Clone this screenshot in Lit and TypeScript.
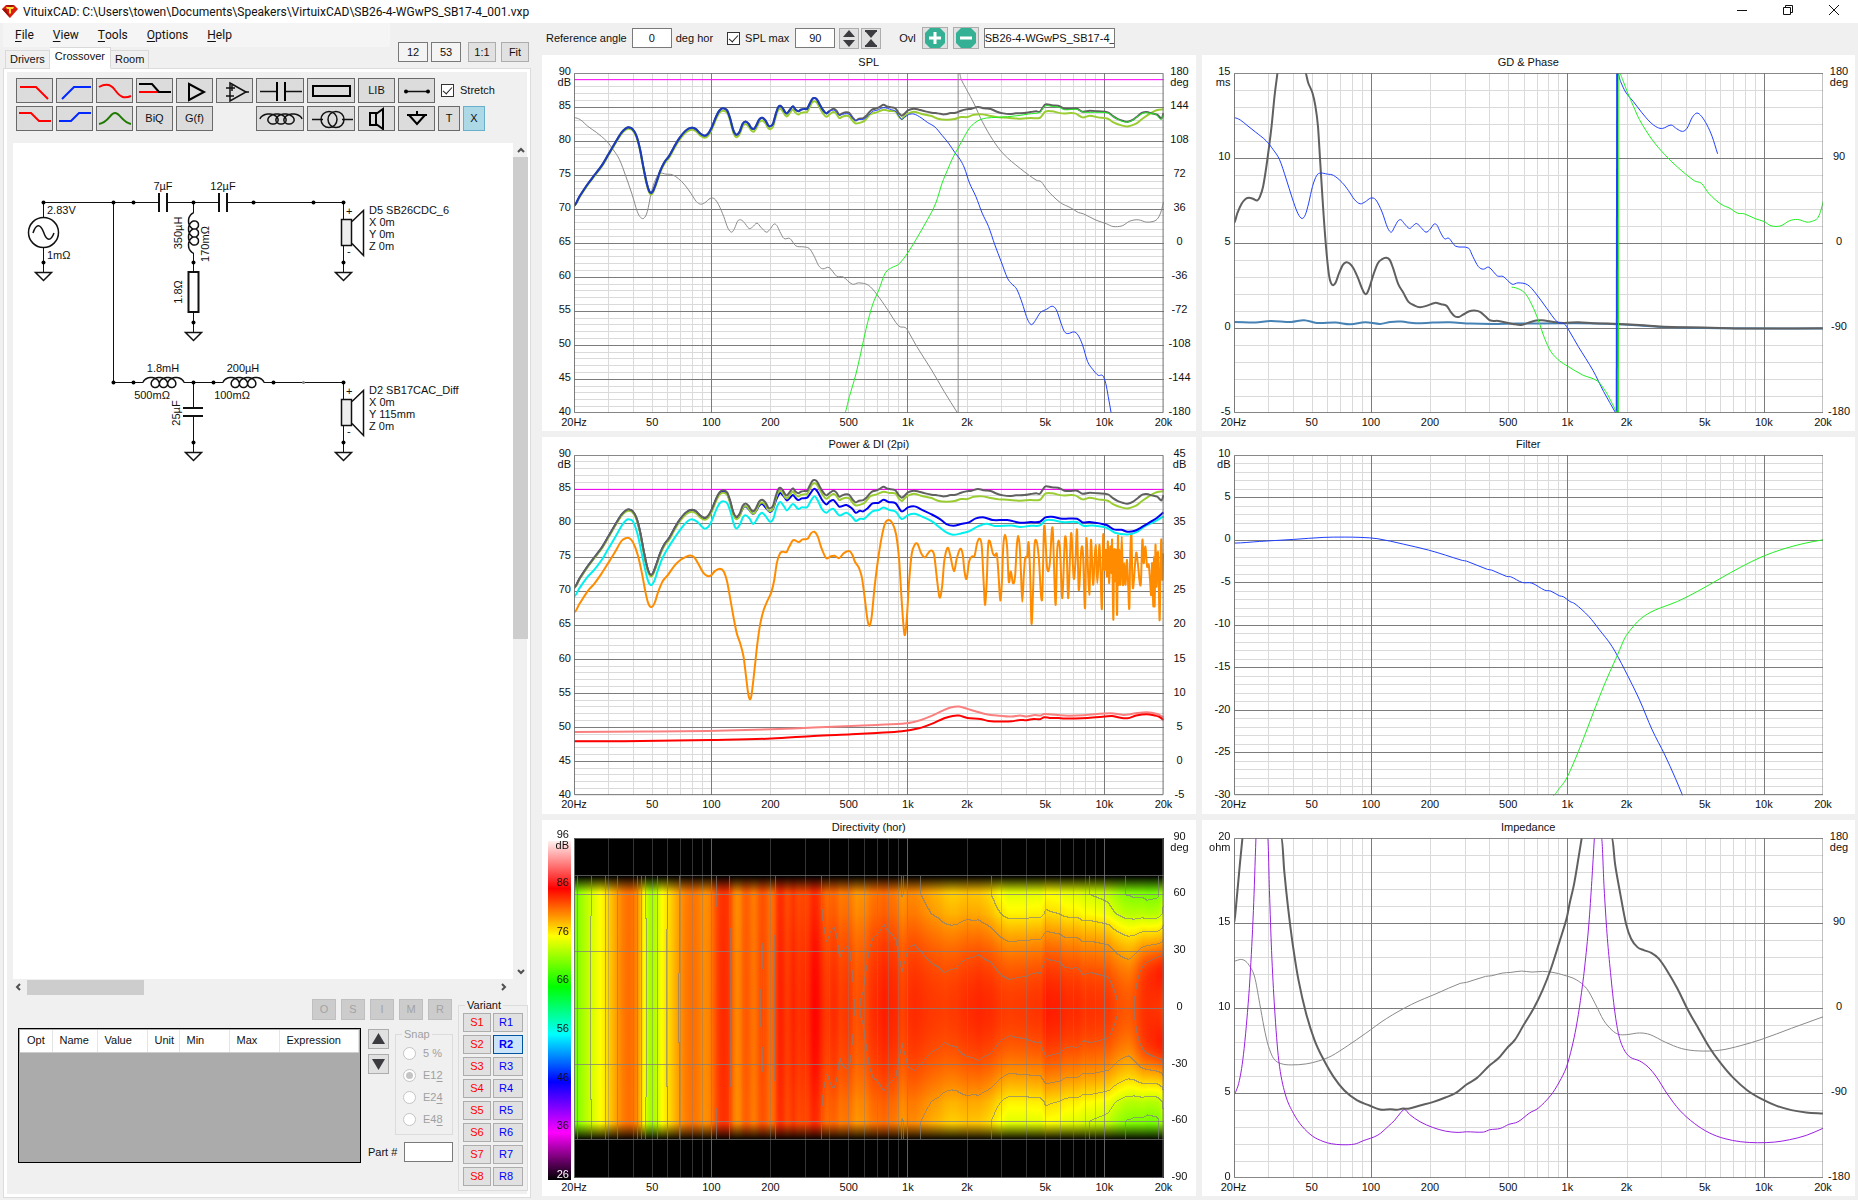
import { LitElement, html, svg, css, nothing } from "lit";
import { customElement, property } from "lit/decorators.js";

type Pt = [number, number];
interface Trace { color: string; width: number; pts: Pt[]; }
interface Frame { x: number; y: number; w: number; h: number; }
interface ChartSpec {
  title: string;
  frame: Frame;
  left: string[]; leftUnit: string;
  right: string[]; rightUnit: string;
  divisions: number; majorEvery: number;
  traces: Trace[];
  heat?: boolean;
}

/* "x,y;x,y" -> list of points, optionally shifted vertically */
const pts = (s: string, dy = 0): Pt[] =>
  s.trim().split(";").filter(Boolean).map((p) => {
    const [a, b] = p.split(",").map(Number);
    return [a, b + dy] as Pt;
  });

/* Smooth curve through all points */
function spline(p: Pt[]): string {
  if (p.length < 3) return "M" + p.map((q) => q.join(" ")).join("L");
  let d = `M${p[0][0]} ${p[0][1]}`;
  for (let i = 0; i < p.length - 1; i++) {
    const a = p[Math.max(0, i - 1)], b = p[i], c = p[i + 1], e = p[Math.min(p.length - 1, i + 2)];
    const h = (c[0] - b[0]) / 3;
    const mb = c[0] === b[0] || b[0] === a[0] ? 0 : (c[1] - a[1]) / (c[0] - a[0]);
    const mc = e[0] === c[0] ? (c[1] - b[1]) / (c[0] - b[0] || 1) : (e[1] - b[1]) / (e[0] - b[0]);
    d += `C${(b[0] + h).toFixed(1)} ${(b[1] + mb * h).toFixed(1)} ${(c[0] - h).toFixed(1)} ${(c[1] - mc * h).toFixed(1)} ${c[0]} ${c[1]}`;
  }
  return d;
}

function interp(p: Pt[], x: number): number {
  if (x <= p[0][0]) return p[0][1];
  for (let i = 1; i < p.length; i++) {
    if (x <= p[i][0]) {
      const t = (x - p[i - 1][0]) / (p[i][0] - p[i - 1][0] || 1);
      return p[i - 1][1] + t * (p[i][1] - p[i - 1][1]);
    }
  }
  return p[p.length - 1][1];
}

/* ---------- measured curves ---------- */
const TOTAL_LOW = "82,617;95,590;115,552;130,527;148,497;163,465;180,428;195,398;205,386;213,383;221,388;230,408;238,445;247,505;255,553;260,573;265,580;270,572;278,545;286,515;296,488;308,468;320,440;332,415;345,395;355,386;363,384;372,389;382,402";
const TOTAL = TOTAL_LOW + ";392,408;400,402;408,385;420,348;428,331;436,326;445,332;452,355;460,392;467,405;475,395;482,372;489,365;496,372;502,384;508,388;514,378;521,360;528,354;536,362;542,376;547,380;554,372;560,345;566,323;571,318;577,325;583,338;587,341;593,332;601,320;607,329;614,335;620,330;628,328;635,327;641,312;647,298;652,295;658,299;665,315;672,330;680,341;688,334;697,327;704,332;711,345;718,341;728,338;735,340;742,352;750,362;758,357;768,355;776,347;784,335;792,328;800,326;808,321;816,315;824,320;835,323;845,327;852,340;859,348;866,342;874,332;888,327;900,330;915,335;930,339;945,341;960,344;975,340;987,339;1000,333;1012,329;1025,327;1040,322;1055,326;1070,328;1085,336;1100,341;1115,343;1130,341;1150,340;1165,337;1178,335;1187,336;1193,325;1200,314;1215,317;1230,318;1245,327;1258,328;1275,327;1288,336;1305,333;1325,335;1348,338;1360,349;1372,358;1385,364;1395,366;1408,360;1420,348;1430,339;1440,337;1452,341;1465,345;1476,356;1480,340";
const TOTAL_PTS = pts(TOTAL);
const LISTEN_HIGH = "750,371;768,366;776,356;785,343;800,338;816,330;830,334;845,336;852,350;859,358;866,350;874,342;888,336;905,342;930,349;945,357;965,360;985,358;1000,352;1015,352;1030,345;1050,344;1070,349;1090,353;1110,354;1140,357;1165,355;1187,354;1200,336;1215,335;1240,341;1270,341;1288,353;1305,348;1325,353;1348,357;1360,367;1380,377;1395,380;1415,372;1430,357;1450,340;1465,331;1480,329";
const LISTEN_PTS: Pt[] = [
  ...TOTAL_PTS.filter((p) => p[0] < 745).map(([x, y]) => [x, y + Math.min(10, 2 + (x - 82) / 70)] as Pt),
  ...pts(LISTEN_HIGH),
];
const shift = (p: Pt[], dy: number): Pt[] => p.map(([x, y]) => [x, y + dy]);

const WOOFER_PTS: Pt[] = [
  ...TOTAL_PTS.filter((p) => p[0] < 690),
  ...pts("697,331;704,336;711,347;718,344;728,342;735,344;742,354;750,363;758,359;768,359;776,352;784,342;792,334;800,332;816,324;835,330;845,335;852,348;859,359;866,353;875,345;888,343;905,354;920,368;938,382;955,407;970,430;985,458;998,480;1008,505;1020,550;1035,590;1050,640;1065,680;1080,735;1095,785;1110,835;1120,852;1132,868;1145,910;1155,950;1162,969;1168,974;1176,962;1188,938;1203,928;1216,919;1226,930;1237,970;1245,995;1253,1001;1268,996;1277,1005;1288,1035;1300,1085;1312,1108;1325,1126;1336,1127;1343,1150;1349,1190;1356,1240"),
];
const TWEETER = "723,1240;735,1190;750,1125;762,1060;775,985;790,915;805,870;820,820;836,803;852,793;873,760;895,715;920,660;940,610;955,550;968,510;980,475;993,445;1008,410;1020,385;1032,370;1045,360;1060,355;1085,353;1110,351;1140,347;1160,343;1187,338;1193,328;1200,318;1215,320;1230,322;1245,330;1275,329;1290,337;1325,338;1348,340;1360,350;1372,359;1385,366;1395,367;1408,361;1420,349;1436,339;1452,342;1462,344;1474,359;1480,345";
const PHASE_A = "82,354;97,360;115,380;135,398;160,425;175,450;190,480;205,530;220,585;232,635;240,653;248,655;256,635;265,580;275,540;285,521;300,523;315,525;330,537;345,556;360,582;372,605;382,613;392,609;405,596;415,597;425,615;437,650;447,685;456,697;463,685;470,664;477,660;485,667;497,686;505,682;516,670;525,682;538,697;546,690;556,673;563,677;570,695;580,716;594,716;608,738;625,741;640,746;652,770;662,797;672,807;687,803;705,829;720,831;742,853;757,849;780,856;800,883;825,928;852,978;868,983;875,995;895,1040;930,1110;960,1175;992,1240";
const PHASE_B = "996,220;1000,238;1013,270;1030,310;1050,365;1075,420;1100,462;1140,506;1178,541;1190,546;1205,572;1235,608;1260,624;1278,638;1290,642;1320,661;1345,672;1360,680;1382,678;1400,664;1420,660;1440,667;1455,665;1465,658;1473,640;1480,608";

const GD_A = "89,670;97,640;107,612;117,597;125,594;134,597;144,602;150,592;158,560;168,480;178,380;185,290;192,220";
const GD_B = "257,215;265,250;275,280;282,320;288,380;293,480;300,620;307,740;314,825;319,850;324,856;330,848;338,820;347,795;355,787;363,791;372,805;382,832;392,865;398,880;403,882;409,866;420,822;430,790;440,778;450,774;458,780;466,805;478,852;490,878;502,905;517,917;530,922;545,918;565,909;580,913;593,918;602,935;612,949;622,951;632,944;645,935;658,932;672,936;685,950;697,962;715,963;730,967;750,972;770,975;790,967;805,962;820,961;840,965;870,969;905,967;940,970;1000,972;1050,975;1100,980;1150,982;1240,984;1300,986;1486,985";
const GD_FILTER = "89,966;140,968;175,963;225,966;255,961;285,969;330,968;365,973;400,967;435,972;460,966;485,965;520,970;560,968;600,967;650,971;700,972;760,971;900,970;1000,973;1050,977;1100,981;1240,985;1486,986";
const PH_WOOFER_A = "89,354;104,361;120,377;140,397;165,423;182,450;197,480;212,535;227,595;240,640;250,656;258,645;266,610;275,560;285,527;294,520;310,523;325,527;345,548;360,572;375,600;388,612;400,606;413,595;425,600;440,637;453,684;462,697;470,680;478,663;485,660;493,672;505,686;514,677;522,671;532,683;544,697;554,688;563,673;570,676;578,697;588,717;598,715;614,739;645,745;655,770;668,800;680,808;693,802;713,828;727,830;748,853;762,849;785,855;805,882;830,925;855,966;872,972;882,990;905,1040;940,1112;965,1175;994,1240";
const PH_WOOFER_B = "998,220;1005,245;1017,277;1035,305;1055,338;1075,367;1092,383;1105,386;1125,376;1138,387;1152,395;1163,385;1175,353;1186,340;1197,350;1210,376;1222,410;1235,462";
const PH_TWEETER_A = "747,862;765,868;780,882;795,915;810,960;825,1015;840,1055;860,1082;880,1099;915,1125;950,1143;970,1175;985,1210;997,1240";
const PH_TWEETER_B = "1002,220;1010,240;1022,280;1035,318;1050,360;1080,420;1110,465;1140,502;1180,543;1197,551;1215,582;1243,613;1265,626;1282,640;1298,642;1325,657;1345,665;1362,678;1385,678;1405,663;1425,659;1447,667;1460,664;1472,655;1479,635;1486,602";

const POWER_PTS: Pt[] = [
  ...pts(TOTAL_LOW, -143),
  ...pts("392,266;400,262;408,243;420,206;428,190;436,186;445,192;452,215;460,252;467,266;475,256;482,236;489,230;496,238;507,253;514,243;521,228;528,222;536,233;547,247;554,238;560,215;566,198;571,190;577,196;583,206;587,212;593,206;601,196;607,204;614,211;622,206;635,204;643,190;652,177;660,187;670,210;680,224;688,216;697,211;704,220;711,231;728,226;742,237;750,249;760,243;768,245;778,236;790,221;805,219;816,210;828,217;845,221;859,245;874,233;890,230;905,239;930,254;950,268;965,283;982,288;1000,283;1020,277;1035,266;1055,263;1075,271;1110,271;1140,279;1165,277;1187,276;1200,263;1215,261;1240,267;1275,267;1288,278;1305,277;1345,286;1362,299;1380,300;1395,306;1412,303;1430,291;1450,276;1465,264;1480,248"),
];
const INROOM = "82,500;95,475;115,440;130,420;148,390;163,358;180,322;195,288;205,272;213,269;222,275;232,310;240,355;250,415;258,455;265,466;272,455;280,425;290,390;300,365;320,325;340,290;352,274;363,269;375,277;390,296;400,292;408,275;420,238;428,220;437,215;446,222;454,250;461,283;467,296;475,285;483,262;490,257;498,266;507,283;515,270;522,255;528,249;537,260;547,276;555,266;562,235;571,217;580,230;587,242;601,223;614,238;622,233;635,232;643,215;652,200;660,212;670,238;680,249;690,240;698,238;711,257;728,249;742,262;750,274;760,267;770,267;780,256;790,245;805,241;816,233;830,241;845,246;859,268;874,256;890,252;905,259;930,274;950,294;965,308;980,315;1000,311;1020,304;1040,290;1060,282;1080,289;1120,287;1140,292;1165,288;1187,287;1200,272;1215,271;1240,277;1275,277;1290,288;1310,287;1345,294;1365,309;1395,314;1415,308;1435,290;1455,278;1480,260";
const REFLECT = "82,548;95,522;115,483;130,462;148,430;163,400;180,365;195,333;205,325;213,325;222,338;233,375;243,430;252,490;258,520;265,532;273,520;282,485;292,455;305,435;320,408;335,390;348,381;358,377;368,384;378,405;388,428;397,438;407,437;416,424;428,417;437,425;445,455;453,510;460,560;468,610;476,640;484,680;490,740;495,790;499,808;503,795;510,720;517,640;524,580;532,540;540,515;550,487;557,450;563,400;571,370;578,366;586,367;592,352;602,331;615,337;624,329;636,327;644,311;652,306;660,320;668,352;680,385;690,380;700,378;711,385;722,370;735,364;742,375;748,395;758,415;765,445;772,510;778,570;783,588;788,560;795,470;803,390;812,320;820,280;829,271;838,283;846,315;853,390;860,530;866,615;871,570;877,450;883,372;890,345;897,343;905,370;914,383;922,370;929,362;936,375;943,450;949,503;955,470;960,395;968,354;974,375;983,424;990,385;998,357;1004,375;1008,425;1013,447;1019,395;1026,380;1032,378;1038,340;1044,327;1049,350;1054,470;1057,525;1061,450;1064,350;1068,334;1075,370;1080,378;1085,375;1089,440;1093,512;1097,450;1100,350;1104,315;1109,350;1113,455;1118,425;1123,460;1128,440;1132,350;1135,318;1139,350;1142,430;1145,516;1149,430;1152,385;1157,380;1160,338;1164,440;1167,582;1171,470;1174,350;1179,335;1184,380;1192,510;1197,290;1204,415;1210,405;1217,295;1224,525;1228,360;1234,350;1240,505;1246,330;1250,350;1254,505;1261,310;1267,445;1271,400;1275,300;1279,480;1285,360;1289,370;1294,535;1297,325;1304,495;1308,330;1313,465;1319,345;1323,460;1328,345;1331,440;1334,535;1337,315;1340,420;1343,360;1346,440;1348,335;1351,460;1354,350;1357,430;1358,330;1361,570;1363,360;1365,455;1367,360;1370,555;1372,318;1374,465;1376,360;1378,465;1381,320;1384,465;1387,400;1390,465;1393,390;1396,460;1399,535;1401,380;1404,315;1406,440;1408,475;1415,370;1419,400;1426,465;1430,330;1433,400;1437,350;1441,410;1445,405;1448,450;1451,495;1453,400;1456,530;1457,380;1459,530;1461,345;1463,470;1465,400;1467,370;1469,480;1471,570;1473,400;1475,330;1477,450;1479,370";
const DI_A = "82,934;200,934;407,930;550,926;650,918;740,913;800,909;860,904;900,895;930,882;960,865;980,858;995,857;1015,864;1045,867;1065,873;1100,875;1120,874;1140,870;1155,871;1172,867;1187,868;1197,862;1210,864;1230,864;1245,866;1300,864;1340,860;1358,858;1375,863;1395,865;1415,857;1440,853;1460,857;1470,861;1480,870";
const DI_B = "82,906;250,905;400,903;550,898;650,893;740,888;800,885;870,880;905,870;930,858;955,843;975,833;995,830;1015,837;1040,846;1060,853;1085,857;1120,860;1140,857;1155,860;1175,855;1187,857;1197,852;1245,857;1290,856;1355,850;1385,855;1410,851;1440,847;1465,852;1480,862";

const FLT_LOW = "89,340;150,335;230,329;300,323;350,322;390,323;430,327;490,343;550,361;590,376;630,392;640,394;690,419;700,421;735,440;745,441;772,458;795,460;825,481;840,484;860,498;870,501;885,515;897,522;930,560;955,600;985,650;1015,720;1050,810;1080,900;1110,975;1135,1045;1152,1096";
const FLT_HIGH = "845,1096;860,1075;875,1050;890,1010;905,965;925,900;940,850;960,785;980,725;998,675;1015,625;1030,598;1050,570;1075,548;1100,534;1140,515;1190,483;1240,447;1290,412;1340,381;1390,358;1440,341;1486,330";

const Z_A = "89,340;95,270;103,160;109,82";
const Z_B = "202,82;208,180;217,290;228,400;242,510;260,610;280,690;300,745;325,800;350,840;380,870;410,886;435,898;460,897;475,899;490,895;502,896;530,886;560,876;590,862;615,848;640,823;665,803;695,765;715,745;735,715;755,688;775,645;800,592;820,540;840,475;860,395;877,325;885,275;895,220;905,145;913,82";
const Z_C = "985,82;992,160;1003,240;1018,340;1030,385;1045,410;1060,419;1078,427;1095,444;1115,480;1140,535;1165,600;1190,655;1215,710;1240,755;1270,800;1305,840;1340,867;1375,887;1410,900;1445,907;1486,910";
const ZM_A = "89,852;93,845;100,820;107,775;113,715;120,620;127,500;135,300;141,82";
const ZM_B = "169,82;173,240;178,420;185,590;195,750;210,850;230,910;250,948;275,978;300,994;320,1001;345,1004;375,1002;395,992;430,975;455,948;470,930;485,906;494,898;505,913;530,935;560,952;590,963;620,967;640,965;680,966;695,959;720,955;740,943;762,935;790,908;810,894;840,855;860,815;877,770;890,710;900,650;910,570;920,470;930,340;937,210;943,82";
const ZM_C = "960,82;966,230;973,370;980,470;990,590;1000,670;1012,715;1027,740;1050,752;1070,770;1090,800;1115,850;1145,900;1180,940;1215,968;1250,985;1290,995;1330,998;1370,996;1405,989;1445,976;1486,954";
const Z_PHASE = "89,452;105,447;115,451;125,465;138,500;150,580;160,650;170,705;183,745;200,760;225,764;260,761;290,752;320,737;360,705;400,670;450,625;510,582;570,549;625,519;640,516;685,498;700,496;725,488;745,486;770,482;795,485;820,483;845,486;870,494;900,508;925,535;945,580;965,630;985,660;1000,672;1020,673;1050,668;1075,673;1110,695;1150,715;1190,722;1240,720;1290,706;1340,687;1410,654;1486,619";

const DARK = "#606060", OLIVE = "#9acd32", BLUE = "#2040ff", GREEN = "#20f020", GRAY = "#8a8a8a", PURPLE = "#9a20e0";
const t = (color: string, width: number, p: string | Pt[]): Trace => ({ color, width, pts: typeof p === "string" ? pts(p) : p });
const range = (from: number, to: number, step: number): string[] => {
  const out: string[] = [];
  for (let v = from; step < 0 ? v >= to : v <= to; v += step) out.push(String(v));
  return out;
};

const CHARTS: ChartSpec[] = [
  {
    title: "SPL", frame: { x: 82, y: 220, w: 1398, h: 1020 },
    left: range(90, 40, -5), leftUnit: "dB", right: range(180, -180, -36), rightUnit: "deg",
    divisions: 50, majorEvery: 5,
    traces: [
      t("#ff00ff", 1, "82,240;1480,240"),
      t(GRAY, 1, PHASE_A), t(GRAY, 1, "993,220;993,1240"), t(GRAY, 1, PHASE_B),
      t(OLIVE, 2, LISTEN_PTS), t(DARK, 2, TOTAL_PTS),
      t(BLUE, 1, WOOFER_PTS), t("#1c3cc0", 2, TOTAL_PTS.filter((p) => p[0] < 690)),
      t(GREEN, 1, TWEETER),
    ],
  },
  {
    title: "GD & Phase", frame: { x: 89, y: 220, w: 1397, h: 1020 },
    left: range(15, -5, -5), leftUnit: "ms", right: range(180, -180, -90), rightUnit: "deg",
    divisions: 20, majorEvery: 5,
    traces: [
      t("#4682b4", 2, GD_FILTER), t(DARK, 2, GD_A), t(DARK, 2, GD_B),
      t(BLUE, 1, PH_WOOFER_A), t(BLUE, 2, "996,1240;997,220"), t(BLUE, 1, PH_WOOFER_B),
      t(GREEN, 1, PH_TWEETER_A), t(GREEN, 1, "1000,1240;1001,220"), t(GREEN, 1, PH_TWEETER_B),
    ],
  },
  {
    title: "Power & DI (2pi)", frame: { x: 82, y: 76, w: 1398, h: 1020 },
    left: range(90, 40, -5), leftUnit: "dB", right: range(45, -5, -5), rightUnit: "dB",
    divisions: 50, majorEvery: 5,
    traces: [
      t("#ff00ff", 1, "82,179;1480,179"),
      t("#ff8c00", 2, REFLECT), t("#00f0f0", 2, INROOM), t("#0000f0", 2, POWER_PTS),
      t(OLIVE, 2, shift(LISTEN_PTS, -144)), t(DARK, 2, shift(TOTAL_PTS, -144)),
      t("#fa8080", 2, DI_B), t("#ff0000", 2, DI_A),
    ],
  },
  {
    title: "Filter", frame: { x: 89, y: 76, w: 1397, h: 1020 },
    left: range(10, -30, -5), leftUnit: "dB", right: [], rightUnit: "",
    divisions: 40, majorEvery: 5,
    traces: [t(BLUE, 1, FLT_LOW), t(GREEN, 1, FLT_HIGH)],
  },
  {
    title: "Directivity (hor)", frame: { x: 82, y: 82, w: 1398, h: 1023 },
    left: range(96, 26, -10), leftUnit: "dB", right: range(90, -90, -30), rightUnit: "deg",
    divisions: 6, majorEvery: 1, traces: [], heat: true,
  },
  {
    title: "Impedance", frame: { x: 89, y: 82, w: 1397, h: 1023 },
    left: range(20, 0, -5), leftUnit: "ohm", right: range(180, -180, -90), rightUnit: "deg",
    divisions: 20, majorEvery: 5,
    traces: [
      t(GRAY, 1, Z_PHASE), t(PURPLE, 1, ZM_A), t(PURPLE, 1, ZM_B), t(PURPLE, 1, ZM_C),
      t(DARK, 2, Z_A), t(DARK, 2, Z_B), t(DARK, 2, Z_C),
    ],
  },
];

const FREQS: [number, string][] = [
  [20, "20Hz"], [50, "50"], [100, "100"], [200, "200"], [500, "500"],
  [1000, "1k"], [2000, "2k"], [5000, "5k"], [10000, "10k"], [20000, "20k"],
];

/* ---------- directivity model ---------- */
const FALLOFF: Pt[] = [[82, 0], [550, 0.0001], [640, 0.0004], [700, 0.0008], [800, 0.001], [873, 0.0012], [950, 0.0017], [975, 0.002], [1013, 0.002], [1060, 0.0023], [1110, 0.003], [1200, 0.0031], [1290, 0.0033], [1340, 0.0035], [1400, 0.0039], [1440, 0.0046], [1465, 0.0044], [1480, 0.0035]];
function level(x: number, deg: number): number {
  const onAxis = 90 - (interp(TOTAL_PTS, x) - 220) / 20.4;
  const a = Math.min(60, Math.abs(deg));
  const eff = a > 50 ? 50 + (a - 50) * 0.5 : a;
  let l = onAxis - interp(FALLOFF, x) * eff * eff;
  if (x > 1400) {
    const s = (x - 1400) / 80;
    l += s * 3.2 * Math.exp(-(((a - 22) / 13) ** 2)) + s * 0.4;
  }
  return l;
}
const STOPS: [number, number, number, number][] = [
  [26, 0, 0, 0], [36, 255, 0, 255], [46, 0, 0, 255], [56, 0, 255, 255],
  [66, 0, 255, 0], [76, 255, 255, 0], [86.5, 255, 0, 0], [96, 255, 240, 240],
];
function heatColor(l: number): [number, number, number] {
  for (let i = 1; i < STOPS.length; i++) {
    if (l <= STOPS[i][0]) {
      const a = STOPS[i - 1], b = STOPS[i], k = Math.max(0, (l - a[0]) / (b[0] - a[0]));
      return [a[1] + k * (b[1] - a[1]), a[2] + k * (b[2] - a[2]), a[3] + k * (b[3] - a[3])];
    }
  }
  return [255, 240, 240];
}

@customElement("plot-chart")
class PlotChart extends LitElement {
  @property({ attribute: false }) spec!: ChartSpec;

  static styles = css`
    :host {
      display: grid;
      min-width: 0;
      min-height: 0;
      background: #fff;
      font: 11px/11px "Liberation Sans", Arial, sans-serif;
      color: #111;
      grid-template-columns: 32px minmax(0, 1fr) 32px;
      grid-template-rows: 18px minmax(0, 1fr) 18px;
    }
    .title { grid-area: 1 / 2; margin: 0; font: inherit; text-align: center; line-height: 15px; }
    .plot { grid-area: 2 / 2; position: relative; min-height: 200px; }
    .plot svg, .plot canvas { position: absolute; inset: 0; width: 100%; height: 100%; display: block; overflow: hidden; }
    .frame { fill: none; stroke: #707070; stroke-width: 1; vector-effect: non-scaling-stroke; }
    .minor, .major { stroke: #dadada; stroke-width: 1; vector-effect: non-scaling-stroke; shape-rendering: crispEdges; }
    .major { stroke: #7c7c7c; }
    .heat .minor { stroke: #808080; stroke-opacity: 0.4; }
    .heat .major { stroke: #808080; stroke-opacity: 0.75; }
    .trace { fill: none; stroke-linejoin: round; vector-effect: non-scaling-stroke; }
    .ticks { display: flex; flex-direction: column; justify-content: space-between; margin: -7px 0 7px; z-index: 1; }
    .tick { height: 0; display: block; line-height: 11px; }
    .left { grid-area: 2 / 1; text-align: right; padding-right: 3px; }
    .left.over { padding-right: 5px; margin: -9px 0 9px; }
    .left.over .tick:last-child { color: #fff; }
    .right { grid-area: 2 / 3; text-align: center; }
    .xaxis { grid-area: 3 / 2; display: flex; align-items: center; height: 18px; white-space: nowrap; }
    .xtick { width: 0; display: flex; justify-content: center; }
    .bar {
      grid-area: 2 / 1; justify-self: end; width: 23px; margin: 3px 3px -2px 0;
      background: linear-gradient(#fff0f0, #f00 14%, #ff0 28%, #0f0 43%, #0ff 57%, #00f 71%, #f0f 86%, #000);
    }
  `;

  firstUpdated() {
    const canvas = this.renderRoot.querySelector("canvas");
    if (canvas) this.paintHeat(canvas);
  }

  private paintHeat(canvas: HTMLCanvasElement) {
    const W = Math.max(200, canvas.clientWidth), H = Math.max(100, canvas.clientHeight);
    canvas.width = W;
    canvas.height = H;
    const ctx = canvas.getContext("2d")!;
    const img = ctx.createImageData(W, H);
    const grid = new Float32Array(W * H);
    for (let j = 0; j < H; j++) {
      const deg = 90 - (j / (H - 1)) * 180;
      for (let i = 0; i < W; i++) grid[j * W + i] = Math.abs(deg) > 70 ? -1000 : level(82 + (1398 * i) / W, deg);
    }
    const band = (v: number) => Math.min(4, Math.floor((v - 71.3) / 3));
    for (let j = 0; j < H; j++) {
      const a = Math.abs(90 - (j / (H - 1)) * 180);
      const fade = a > 70 ? 0 : a > 61 ? (70 - a) / 9 : 1;
      for (let i = 0; i < W; i++) {
        const k = j * W + i, v = grid[k];
        let [r, g, b] = a > 70 ? [0, 0, 0] : heatColor(v).map((c) => c * fade);
        const right = i + 1 < W ? grid[k + 1] : v, below = j + 1 < H ? grid[k + W] : v;
        if (band(v) !== band(right) || band(v) !== band(below)) { r = (r + 256) / 3; g = (g + 256) / 3; b = (b + 256) / 3; }
        img.data.set([r, g, b, 255], k * 4);
      }
    }
    ctx.putImageData(img, 0, 0);
  }

  private grid() {
    const { frame: f, divisions, majorEvery } = this.spec;
    const fx = (hz: number) => f.x + (f.w * Math.log10(hz / 20)) / 3;
    const out: unknown[] = [];
    const major: unknown[] = [];
    for (let i = 1; i < divisions; i++) {
      const y = f.y + (f.h * i) / divisions;
      const isMajor = i % majorEvery === 0;
      (isMajor ? major : out).push(svg`<line class=${isMajor ? "major" : "minor"} x1=${f.x} x2=${f.x + f.w} y1=${y} y2=${y}></line>`);
    }
    for (const d of [10, 100, 1000, 10000]) {
      for (let m = 1; m < 10; m++) {
        const hz = d * m;
        if (hz <= 20 || hz >= 20000) continue;
        const x = fx(hz);
        (m === 1 ? major : out).push(svg`<line class=${m === 1 ? "major" : "minor"} x1=${x} x2=${x} y1=${f.y} y2=${f.y + f.h}></line>`);
      }
    }
    return [...out, ...major];
  }

  render() {
    const s = this.spec, f = s.frame;
    const labels = (l: string[], unit: string) =>
      l.map((v, i) => html`<span class="tick">${v}${i === 0 ? html`<br />${unit}` : nothing}</span>`);
    return html`
      <h2 class="title">${s.title}</h2>
      ${s.heat ? html`<div class="bar"></div>` : nothing}
      <div class="ticks left ${s.heat ? "over" : ""}">${labels(s.left, s.leftUnit)}</div>
      <div class="plot">
        ${s.heat ? html`<canvas></canvas>` : nothing}
        <svg class=${s.heat ? "heat" : ""} viewBox="${f.x} ${f.y} ${f.w} ${f.h}" preserveAspectRatio="none" role="img" aria-label=${s.title}>
          ${this.grid()}
          ${s.traces.map((tr) => svg`<path class="trace" stroke=${tr.color} stroke-width=${tr.width} d=${spline(tr.pts)}></path>`)}
          <rect class="frame" x=${f.x + 1} y=${f.y + 1} width=${f.w - 2} height=${f.h - 3}></rect>
        </svg>
      </div>
      <div class="ticks right">${labels(s.right, s.rightUnit)}</div>
      <div class="xaxis">
        ${FREQS.map(([hz, label], i) => html`
          ${i ? html`<span style="flex:${Math.log10(hz / FREQS[i - 1][0])} 0 0"></span>` : nothing}
          <span class="xtick">${label}</span>`)}
      </div>
    `;
  }
}

/* Coil winding along the x axis, three loops hanging below */
function coil(x: number, y: number, len: number, b = 6, r = 5): string {
  const turns = 7 * Math.PI, v = (len - 2 * b) / turns;
  let d = "";
  for (let i = 0; i <= 140; i++) {
    const p = (turns * i) / 140;
    d += `${i ? "L" : "M"}${(x + v * p + b * (1 - Math.cos(p))).toFixed(1)} ${(y - r * Math.sin(p)).toFixed(1)}`;
  }
  return d;
}

const ICONS: Record<string, unknown> = {
  lowpass: svg`<path class="r" d="M3 8H19L31 20"/>`,
  highpass: svg`<path class="b" d="M5 20L17 8H34"/>`,
  slope: svg`<path class="r" d="M2 8C9 4 14 5 18 11C23 18 27 20 34 17"/>`,
  shelfmix: svg`<path class="r" d="M2 13H22"/><path class="k" d="M2 5H15L22 13H34"/>`,
  amp: svg`<path class="k" d="M12 5L27 13L12 21Z"/>`,
  opamp: svg`<path class="n" d="M13 4L29 13L13 22Z"/><path class="n" d="M28 13H32M9 9H18M9 17H17M15 6V12"/>`,
  cap: svg`<path class="n" d="M3 12.500H20M27 12.500H45"/><path class="k" d="M20 3V22M28 3V22"/>`,
  res: svg`<rect class="k" x="5" y="7" width="37" height="10"/>`,
  wire: svg`<path class="n" d="M7 12.500H29"/><circle cx="7" cy="12.500" r="2"/><circle cx="29" cy="12.500" r="2"/>`,
  lowshelf: svg`<path class="r" d="M2 6H14L22 14H34"/>`,
  highshelf: svg`<path class="b" d="M2 14H14L22 6H34"/>`,
  bell: svg`<path class="g" d="M2 17C12 15 13 6 18 6C23 6 25 15 34 17"/>`,
  coil: svg`<path class="n" d=${coil(3, 12, 42, 7, 5)}/>`,
  trafo: svg`<path class="n" d="M4 12.500H15M34 12.500H45"/><circle class="n" cx="21" cy="12.500" r="8"/><circle class="n" cx="28" cy="12.500" r="8"/>`,
  speaker: svg`<path class="k" d="M11 6H17V18H11ZM17 7L24 2V22L17 17"/>`,
  ground: svg`<path class="k" d="M8 8H28M10 8L18 17L26 8M18 4V8"/>`,
};

const ROW1 = ["lowpass", "highpass", "slope", "shelfmix", "amp", "opamp", "cap", "res", "=LIB", "wire"];
const ROW2 = ["lowshelf", "highshelf", "bell", "=BiQ", "=G(f)", "", "coil", "trafo", "speaker", "ground"];

@customElement("cad-schematic")
class CadSchematic extends LitElement {
  static styles = css`
    :host { display: block; overflow: hidden; background: #fff; min-width: 0; }
    svg { display: block; width: 500px; height: 834px; }
    text { font: 11px "Liberation Sans", Arial, sans-serif; fill: #111; }
    .w { fill: none; stroke: #111; stroke-width: 1; }
    .t { fill: none; stroke: #111; stroke-width: 2; }
    .m { fill: none; stroke: #111; stroke-width: 1.5; }
    .lit { fill: #eee; }
  `;
  private ground(x: number, y: number) {
    return svg`<path class="w" d="M${x} ${y - 10}V${y}"/><path class="m" d="M${x - 8} ${y}H${x + 8}L${x} ${y + 8}Z"/>`;
  }
  private driver(y: number, name: string, lines: string[]) {
    return svg`
      <path class="w" d="M343.500 ${y}V${y + 17}M343.500 ${y + 43}V${y + 60}"/>
      <rect class="m lit" x="341.500" y=${y + 17} width="10" height="26"/>
      <path class="m" d="M352 ${y + 19}L363.500 ${y + 8}V${y + 53}L352 ${y + 41}"/>
      ${this.ground(343.5, y + 70)}
      <text x="346" y=${y + 12}>+</text><text x="347" y=${y + 52}>-</text>
      ${[name, ...lines].map((l, i) => svg`<text x="369" y=${y + 11 + i * 12}>${l}</text>`)}`;
  }
  render() {
    const dots: Pt[] = [[43.5, 202.5], [113.5, 202.5], [133.5, 202.5], [193.5, 202.5], [253.5, 202.5], [313.5, 202.5], [343.5, 202.5], [43.5, 262.5], [193.5, 262.5], [193.5, 322.5], [343.5, 262.5], [113.5, 382.5], [133.5, 382.5], [193.5, 382.5], [213.5, 382.5], [273.5, 382.5], [343.5, 382.5], [193.5, 442.5], [343.5, 442.5]];
    return html`<svg viewBox="13 143 500 834" role="img" aria-label="Crossover schematic">
      <path class="w" d="M43.500 217V202.500H159M167 202.500H219M227 202.500H343.500M113.500 202.500V382.500H143M184 382.500H223M264 382.500H343.500M43.500 248V263M193.500 202.500V213M193.500 253V272M193.500 312V323M193.500 382.500V408M193.500 416V443"/>
      <path class="t" d="M159 193V212M167 193V212M219 193V212M227 193V212M183 408H203M183 416H203"/>
      <circle class="m" cx="43.500" cy="232.500" r="15"/>
      <path class="m" d="M33 233C36 224 40 223 43.500 232C47 242 51 241 54 233"/>
      <path class="m" d=${coil(143, 382.5, 41)}/>
      <path class="m" d=${coil(223, 382.5, 41)}/>
      <path class="m" transform="translate(193.500 213) rotate(90) scale(1 -1)" d=${coil(0, 0, 40)}/>
      <rect class="t" x="188.500" y="272" width="10" height="40"/>
      ${this.ground(43.5, 272.5)}${this.ground(193.5, 332.5)}${this.ground(193.5, 452.5)}
      ${this.driver(202.5, "D5 SB26CDC_6", ["X 0m", "Y 0m", "Z 0m"])}
      ${this.driver(382.5, "D2 SB17CAC_Diff", ["X 0m", "Y 115mm", "Z 0m"])}
      ${dots.map(([x, y]) => svg`<circle cx=${x} cy=${y} r="2"/>`)}
      <circle cx="303.500" cy="382.500" r="1.500" fill="#888"/>
      <text x="47" y="214">2.83V</text><text x="47" y="259">1mΩ</text>
      <text x="163" y="190" text-anchor="middle">7µF</text><text x="223" y="190" text-anchor="middle">12µF</text>
      <text x="163" y="372" text-anchor="middle">1.8mH</text><text x="243" y="372" text-anchor="middle">200µH</text>
      <text x="152" y="399" text-anchor="middle">500mΩ</text><text x="232" y="399" text-anchor="middle">100mΩ</text>
      <text transform="translate(182 233) rotate(-90)" text-anchor="middle">350µH</text>
      <text transform="translate(209 244) rotate(-90)" text-anchor="middle">170mΩ</text>
      <text transform="translate(182 292) rotate(-90)" text-anchor="middle">1.8Ω</text>
      <text transform="translate(180 413) rotate(-90)" text-anchor="middle">25µF</text>
    </svg>`;
  }
}

@customElement("app-root")
class AppRoot extends LitElement {
  static styles = css`
    :host { display: block; }
    * { box-sizing: border-box; }
    .window {
      display: flex; flex-direction: column; min-height: 100vh; background: #f0f0f0; color: #111;
      font: 11px/13px "Liberation Sans", Arial, sans-serif;
    }
    button, input { font: inherit; color: inherit; margin: 0; padding: 0; }
    button { background: #e1e1e1; border: 1px solid #adadad; display: flex; align-items: center; justify-content: center; }
    input[type="text"] { border: 1px solid #7a7a7a; background: #fff; height: 20px; text-align: center; }
    input[type="checkbox"] {
      appearance: none; width: 13px; height: 13px; border: 1px solid #333; background: #fff; display: grid; place-items: center;
    }
    input[type="checkbox"]:checked::after {
      content: ""; width: 4px; height: 8px; border: solid #222; border-width: 0 1px 1px 0; transform: rotate(42deg); margin-top: -2px;
    }
    label { display: flex; align-items: center; gap: 6px; }

    .titlebar { height: 23px; background: #fff; display: flex; align-items: center; padding: 0 18px 0 2px; font: 12px/16px Roboto, "Open Sans", sans-serif; }
    .logo { width: 16px; height: 13px; margin-right: 5px; }
    .titlebar h1 { font: inherit; margin: 0; flex: 1; white-space: nowrap; }
    .winbtns { display: flex; gap: 34px; align-self: flex-start; padding-top: 4px; }
    .winbtns button { background: none; border: 0; width: 12px; height: 12px; }
    .winbtns svg { width: 12px; height: 12px; fill: none; stroke: #111; }

    .main { flex: 1; display: flex; }
    .side { width: 542px; flex: none; display: flex; flex-direction: column; padding: 0 11px 2px 3px; }
    .head { display: flex; justify-content: space-between; align-items: flex-end; }
    .menu { display: flex; width: 387px; height: 24px; align-items: center; background: #f5f5f5; font: 12px/16px Roboto, "Open Sans", sans-serif; padding-left: 12px; gap: 19px; }
    .menu button { font: inherit; background: none; border: 0; }
    .menu u, .opt u { text-underline-offset: 2px; }
    .tabs { display: flex; align-items: flex-end; margin: 0 0 -1px 2px; position: relative; }
    .tabs button { height: 19px; padding: 0 4px; background: #f0f0f0; border: 1px solid #d9d9d9; border-left-width: 0; }
    .tabs button:first-child { border-left-width: 1px; }
    .tabs .on { height: 22px; padding: 0 5px 3px; background: #fff; border-bottom-color: #fff; }
    .zoom { display: flex; gap: 3px; padding-bottom: 6px; margin-right: 2px; }
    .zoom input, .zoom button { width: 30px; height: 20px; }
    .zoom input { background: #f4f4f4; }
    .zoom button { width: 28px; margin-left: 2px; }
    .zoom button:first-of-type { margin-left: 4px; }
    .page { flex: 1; display: flex; flex-direction: column; border: 1px solid #dcdcdc; background: #f0f0f0; box-shadow: inset 0 0 0 3px #fff; padding: 9px 2px 6px 5px; }

    .tools { display: grid; grid-template-columns: repeat(6, 37px) 48px 48px 37px 37px auto; gap: 3px; grid-auto-rows: 25px; padding-left: 7px; margin-bottom: 12px; justify-content: start; }
    .tools button { background: #dcdcdc; border-color: #6a6a6a; }
    .tools svg { width: 100%; height: 100%; }
    .r, .b, .g, .k, .n { fill: none; stroke-width: 2; }
    .r { stroke: #f00; } .b { stroke: #0028ff; } .g { stroke: #1f7a00; } .k { stroke: #000; stroke-width: 2; } .n { stroke: #111; stroke-width: 1.5; }
    .tail { display: flex; gap: 3px; align-items: center; }
    .tail label { padding-left: 3px; }
    .tail button { width: 22px; height: 25px; }
    .tools .tail .x { background: #add8e6; border-color: #6ab0cc; }

    .scroller { flex: 1; display: grid; grid-template: minmax(400px, 1fr) 16px / minmax(0, 1fr) 15px; margin-left: 4px; }
    .vbar { display: flex; flex-direction: column; align-items: center; justify-content: space-between; }
    .thumb { background: #cdcdcd; }
    .vbar .thumb { width: 15px; height: 57.600%; margin-bottom: auto; }
    .hbar .thumb { height: 15px; width: 117px; margin-right: auto; }
    .hbar { display: flex; align-items: center; justify-content: space-between; }
    .arrow { width: 14px; height: 14px; flex: none; fill: none; stroke: #505050; stroke-width: 2; }

    .bottom { display: flex; padding: 4px 0 0 9px; justify-content: space-between; }
    .editor { display: flex; flex-direction: column; gap: 8px; width: 435px; }
    .modes { display: flex; justify-content: flex-end; gap: 5px; padding-right: 1px; }
    .modes button { width: 24px; height: 21px; background: #ccc; border-color: #bfbfbf; color: #a3a3a3; }
    .params { display: flex; gap: 7px; }
    .tablebox { width: 343px; height: 135px; border: 1px solid #000; background: #ababab; padding: 1px; }
    table { border-collapse: collapse; table-layout: fixed; width: 100%; }
    th { background: #fff; height: 22px; padding: 0 0 0 7px; font-weight: normal; text-align: left; border-right: 1px solid #e5e5e5; border-bottom: 1px solid #ccc; }
    .c33 { width: 32px; } .c45 { width: 45px; } .c50 { width: 50px; } .c31 { width: 32px; }
    .snapcol { display: flex; flex-direction: column; justify-content: space-between; width: 85px; }
    .snaprow { display: flex; justify-content: space-between; }
    .updown { display: flex; flex-direction: column; gap: 5px; padding-top: 1px; }
    .updown button { width: 21px; height: 20px; }
    .updown svg { width: 15px; height: 12px; fill: #3c3c40; }
    fieldset { border: 1px solid #dcdcdc; margin: 0; padding: 0; min-width: 0; }
    legend { line-height: 12px; padding: 0 2px; margin-left: 6px; }
    .snap { width: 58px; display: flex; color: #a0a0a0; }
    .opts { display: flex; flex-direction: column; gap: 8px; padding: 6px 0 8px 7px; }
    .opt { height: 14px; gap: 7px; }
    .opt input { appearance: none; width: 13px; height: 13px; border-radius: 50%; border: 1px solid #c4c4c4; background: #fff; display: grid; place-items: center; }
    .opt input:checked::after { content: ""; width: 7px; height: 7px; border-radius: 50%; background: #c4c4c4; }
    .part { justify-content: space-between; margin-bottom: 1px; }
    .part input { width: 49px; }
    .variant { width: 70px; }
    .variant .grid { display: grid; grid-template-columns: 28px 30px; gap: 3px 2px; grid-auto-rows: 19px; padding: 2px 3px 4px 4px; }
    .variant .s { color: #f00; }
    .variant .v { color: #00f; padding-right: 4px; }
    .variant .on { background: #cce4f7; border-color: #0054a0; font-weight: bold; }

    .content { flex: 1; min-width: 0; display: flex; flex-direction: column; padding: 0 3px 4px 0; }
    .bar { height: 32px; display: flex; align-items: center; padding: 0 0 2px 4px; }
    .bar label { gap: 5px; }
    .bar .num { width: 40px; }
    .bar .after { margin: 0 14px 0 4px; }
    .bar .max { gap: 5px; margin-right: 6px; }
    .spin { width: 20px; height: 21px; margin-left: 4px; }
    .spin + .spin { margin-left: 2px; }
    .spin svg { width: 14px; height: 19px; fill: #3c3c40; flex: none; }
    .bar .ovl { margin: 0 6px 0 18px; }
    .round { width: 26px; height: 22px; margin-right: 5px; }
    .round svg { width: 20px; height: 20px; flex: none; }
    .bar .name { width: 131px; text-align: left; padding: 0; }
    .charts { flex: 1; display: grid; grid-template-columns: repeat(2, minmax(0, 1fr)); grid-auto-rows: minmax(0, 1fr); gap: 6px; }
  `;

  private tool(name: string) {
    if (!name) return html`<span></span>`;
    if (name[0] === "=") return html`<button type="button">${name.slice(1)}</button>`;
    return html`<button type="button" aria-label=${name}><svg>${ICONS[name]}</svg></button>`;
  }

  private menuItem(s: string) {
    return html`<button type="button"><u>${s[0]}</u>${s.slice(1)}</button>`;
  }

  render() {
    return html`
      <div class="window">
        <header class="titlebar">
          <svg class="logo" viewBox="0 0 16 13"><path d="M4 0H12L16 4L8 13L0 4Z" fill="#d81c10"/><path d="M4 0L8 3L12 0ZM0 4H4L8 13Z" fill="#9c1208"/><path d="M4 2H12L11 4H9V8L8 9L7 8V4H5Z" fill="#ffe030"/></svg>
          <h1>VituixCAD: C:\\Users\\towen\\Documents\\Speakers\\VirtuixCAD\\SB26-4-WGwPS_SB17-4_001.vxp</h1>
          <div class="winbtns">
            <button type="button" aria-label="Minimize"><svg><path d="M1 6.500H11"/></svg></button>
            <button type="button" aria-label="Restore"><svg><path d="M1.500 3.500H8.500V10.500H1.500ZM3.500 3V1.500H10.500V8.500H9"/></svg></button>
            <button type="button" aria-label="Close"><svg><path d="M1 1L11 11M11 1L1 11"/></svg></button>
          </div>
        </header>
        <div class="main">
          <section class="side">
            <div class="head">
              <div>
                <nav class="menu">${["File", "View", "Tools", "Options", "Help"].map((m) => this.menuItem(m))}</nav>
                <div class="tabs">
                  <button type="button">Drivers</button><button type="button" class="on">Crossover</button><button type="button">Room</button>
                </div>
              </div>
              <div class="zoom">
                <input type="text" aria-label="Columns" value="12" /><input type="text" aria-label="Rows" value="53" />
                <button type="button">1:1</button><button type="button">Fit</button>
              </div>
            </div>
            <div class="page">
              <div class="tools">
                ${ROW1.map((n) => this.tool(n))}
                <div class="tail"><label><input type="checkbox" checked />Stretch</label></div>
                ${ROW2.map((n) => this.tool(n))}
                <div class="tail"><button type="button">T</button><button type="button" class="x">X</button></div>
              </div>
              <div class="scroller">
                <cad-schematic></cad-schematic>
                <div class="vbar">
                  <svg class="arrow"><path d="M4 9L7 6L10 9"/></svg><div class="thumb"></div><svg class="arrow"><path d="M4 5L7 8L10 5"/></svg>
                </div>
                <div class="hbar">
                  <svg class="arrow"><path d="M7 4L4 7L7 10"/></svg><div class="thumb"></div><svg class="arrow"><path d="M3 4L6 7L3 10"/></svg>
                </div>
              </div>
              <div class="bottom">
                <div class="editor">
                  <div class="modes">${["O", "S", "I", "M", "R"].map((m) => html`<button type="button" disabled>${m}</button>`)}</div>
                  <div class="params">
                    <div class="tablebox">
                      <table>
                        <thead><tr>
                          <th class="c33">Opt</th><th class="c45">Name</th><th class="c50">Value</th><th class="c31">Unit</th>
                          <th class="c50">Min</th><th class="c50">Max</th><th>Expression</th>
                        </tr></thead>
                      </table>
                    </div>
                    <div class="snapcol">
                      <div class="snaprow">
                        <div class="updown">
                          <button type="button" aria-label="Move up"><svg><path d="M7.500 0L14 11H1Z"/></svg></button>
                          <button type="button" aria-label="Move down"><svg><path d="M7.500 12L14 1H1Z"/></svg></button>
                        </div>
                        <fieldset class="snap">
                          <legend>Snap</legend>
                          <div class="opts">
                            ${[["5 ", "%"], ["E1", "2"], ["E2", "4"], ["E4", "8"]].map(([a, b], i) => html`
                              <label class="opt"><input type="radio" name="snap" disabled ?checked=${i === 1} /><span>${a}${i ? html`<u>${b}</u>` : b}</span></label>`)}
                          </div>
                        </fieldset>
                      </div>
                      <label class="part">Part #<input type="text" /></label>
                    </div>
                  </div>
                </div>
                <fieldset class="variant">
                  <legend>Variant</legend>
                  <div class="grid">
                    ${[1, 2, 3, 4, 5, 6, 7, 8].map((n) => html`
                      <button type="button" class="s">S${n}</button><button type="button" class="v ${n === 2 ? "on" : ""}">R${n}</button>`)}
                  </div>
                </fieldset>
              </div>
            </div>
          </section>
          <section class="content">
            <div class="bar">
              <label>Reference angle<input class="num" type="text" value="0" /></label>
              <span class="after">deg hor</span>
              <label class="max"><input type="checkbox" checked />SPL max</label>
              <input class="num" type="text" aria-label="SPL max value" value="90" />
              <button type="button" class="spin" aria-label="Expand range"><svg><path d="M7 1L13 8H1ZM7 18L13 11H1Z"/></svg></button>
              <button type="button" class="spin" aria-label="Shrink range"><svg><path d="M7 9L13 2H1ZM7 10L13 17H1Z"/><path d="M1 1H13V3H1ZM1 16H13V18H1Z"/></svg></button>
              <label class="ovl" for="overlay">Ovl</label>
              <button type="button" class="round" aria-label="Add overlay"><svg><path d="M5 0H15L20 5V15L15 20H5L0 15V5Z" fill="#34b094"/><path d="M4 10H16M10 4V16" stroke="#fff" stroke-width="3"/></svg></button>
              <button type="button" class="round" aria-label="Remove overlay"><svg><path d="M5 0H15L20 5V15L15 20H5L0 15V5Z" fill="#34b094"/><path d="M4 10H16" stroke="#fff" stroke-width="3"/></svg></button>
              <input id="overlay" class="name" type="text" value="SB26-4-WGwPS_SB17-4_" />
            </div>
            <div class="charts">${CHARTS.map((c) => html`<plot-chart .spec=${c}></plot-chart>`)}</div>
          </section>
        </div>
      </div>
    `;
  }
}
